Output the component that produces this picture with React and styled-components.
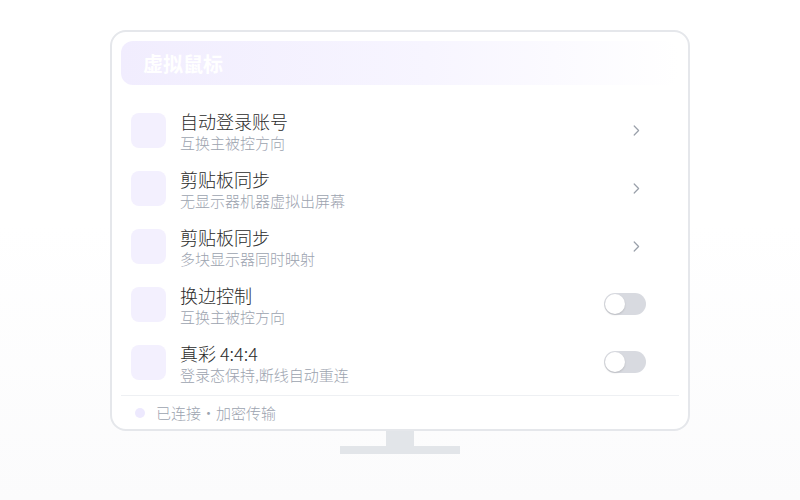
import React from 'react'
import styled, { createGlobalStyle } from 'styled-components'

const Global = createGlobalStyle`
  html, body {
    margin: 0;
    background: #ffffff;
    font-family: "Noto Sans CJK SC", "Noto Sans", sans-serif;
  }
`

const Page = styled.div`
  width: 800px;
  height: 500px;
  display: flex;
  flex-direction: column;
  align-items: center;
  padding-top: 30px;
  box-sizing: border-box;
  background: linear-gradient(180deg, #ffffff 0%, #ffffff 45%, #fbfbfc 100%);
`
const Monitor = styled.div`
  width: 580px;
  height: 401px;
  box-sizing: border-box;
  border: 2px solid #e5e7eb;
  border-radius: 16px;
  padding: 9px 9px 0;
  display: flex;
  flex-direction: column;
  background: #fff;
`
const Header = styled.div`
  height: 45px;
  border-radius: 12px;
  background: linear-gradient(90deg, #f1edfe 0%, #f7f5ff 55%, #ffffff 100%);
  display: flex;
  align-items: center;
  padding-left: 22px;
  font-size: 20px;
  font-weight: 700;
  color: #ffffff;
`
const List = styled.div`
  display: flex;
  flex-direction: column;
  padding-top: 16px;
`
const Row = styled.div`
  height: 58px;
  display: flex;
  align-items: center;
  padding: 0 33px 0 10px;
`
const IconBox = styled.div`
  width: 35px;
  height: 35px;
  border-radius: 8px;
  background: #f3f0fe;
  flex-shrink: 0;
`
const Texts = styled.div`
  flex: 1;
  margin-left: 14px;
  display: flex;
  flex-direction: column;
`
const Title = styled.div`
  font-size: 18px;
  line-height: 24px;
  font-weight: 300;
  color: #2b2b2b;
`
const Sub = styled.div`
  font-size: 15px;
  line-height: 19px;
  font-weight: 300;
  color: #9ca3af;
`
const Chevron = styled.svg`
  width: 7px;
  height: 11px;
  margin-right: 6px;
`
const Toggle = styled.div`
  width: 42px;
  height: 22px;
  border-radius: 11px;
  background: #d8dae0;
  position: relative;
  &::after {
    content: '';
    position: absolute;
    left: 1px;
    top: 1px;
    width: 20px;
    height: 20px;
    border-radius: 50%;
    background: #fff;
    box-shadow: 0 1px 2px rgba(0,0,0,0.15);
  }
`
const Footer = styled.div`
  margin-top: 4px;
  border-top: 1px solid #eef0f3;
  height: 33px;
  display: flex;
  align-items: center;
  padding-left: 14px;
  gap: 11px;
  font-size: 15px;
  font-weight: 300;
  color: #9ca3af;
`
const Dot = styled.span`
  width: 10px;
  height: 10px;
  border-radius: 50%;
  background: #ede9fe;
`
const Neck = styled.div`
  width: 28px;
  height: 15px;
  background: #e2e5e9;
`
const Base = styled.div`
  width: 120px;
  height: 8px;
  background: #e2e5e9;
`

const rows = [
  { title: '自动登录账号', sub: '互换主被控方向', kind: 'chevron' },
  { title: '剪贴板同步', sub: '无显示器机器虚拟出屏幕', kind: 'chevron' },
  { title: '剪贴板同步', sub: '多块显示器同时映射', kind: 'chevron' },
  { title: '换边控制', sub: '互换主被控方向', kind: 'toggle' },
  { title: '真彩 4:4:4', sub: '登录态保持,断线自动重连', kind: 'toggle' },
]

const App = () => {
  return (
    <Page>
      <Global />
      <Monitor>
        <Header>虚拟鼠标</Header>
        <List>
          {rows.map((r, i) => (
            <Row key={i}>
              <IconBox />
              <Texts>
                <Title>{r.title}</Title>
                <Sub>{r.sub}</Sub>
              </Texts>
              {r.kind === 'chevron' ? (
                <Chevron viewBox="0 0 7 11">
                  <path d="M1.2 1 L5.6 5.5 L1.2 10" fill="none" stroke="#9aa0aa" strokeWidth="1.2" strokeLinecap="round" strokeLinejoin="round" />
                </Chevron>
              ) : (
                <Toggle />
              )}
            </Row>
          ))}
        </List>
        <Footer>
          <Dot />
          已连接·加密传输
        </Footer>
      </Monitor>
      <Neck />
      <Base />
    </Page>
  )
}

export default App
